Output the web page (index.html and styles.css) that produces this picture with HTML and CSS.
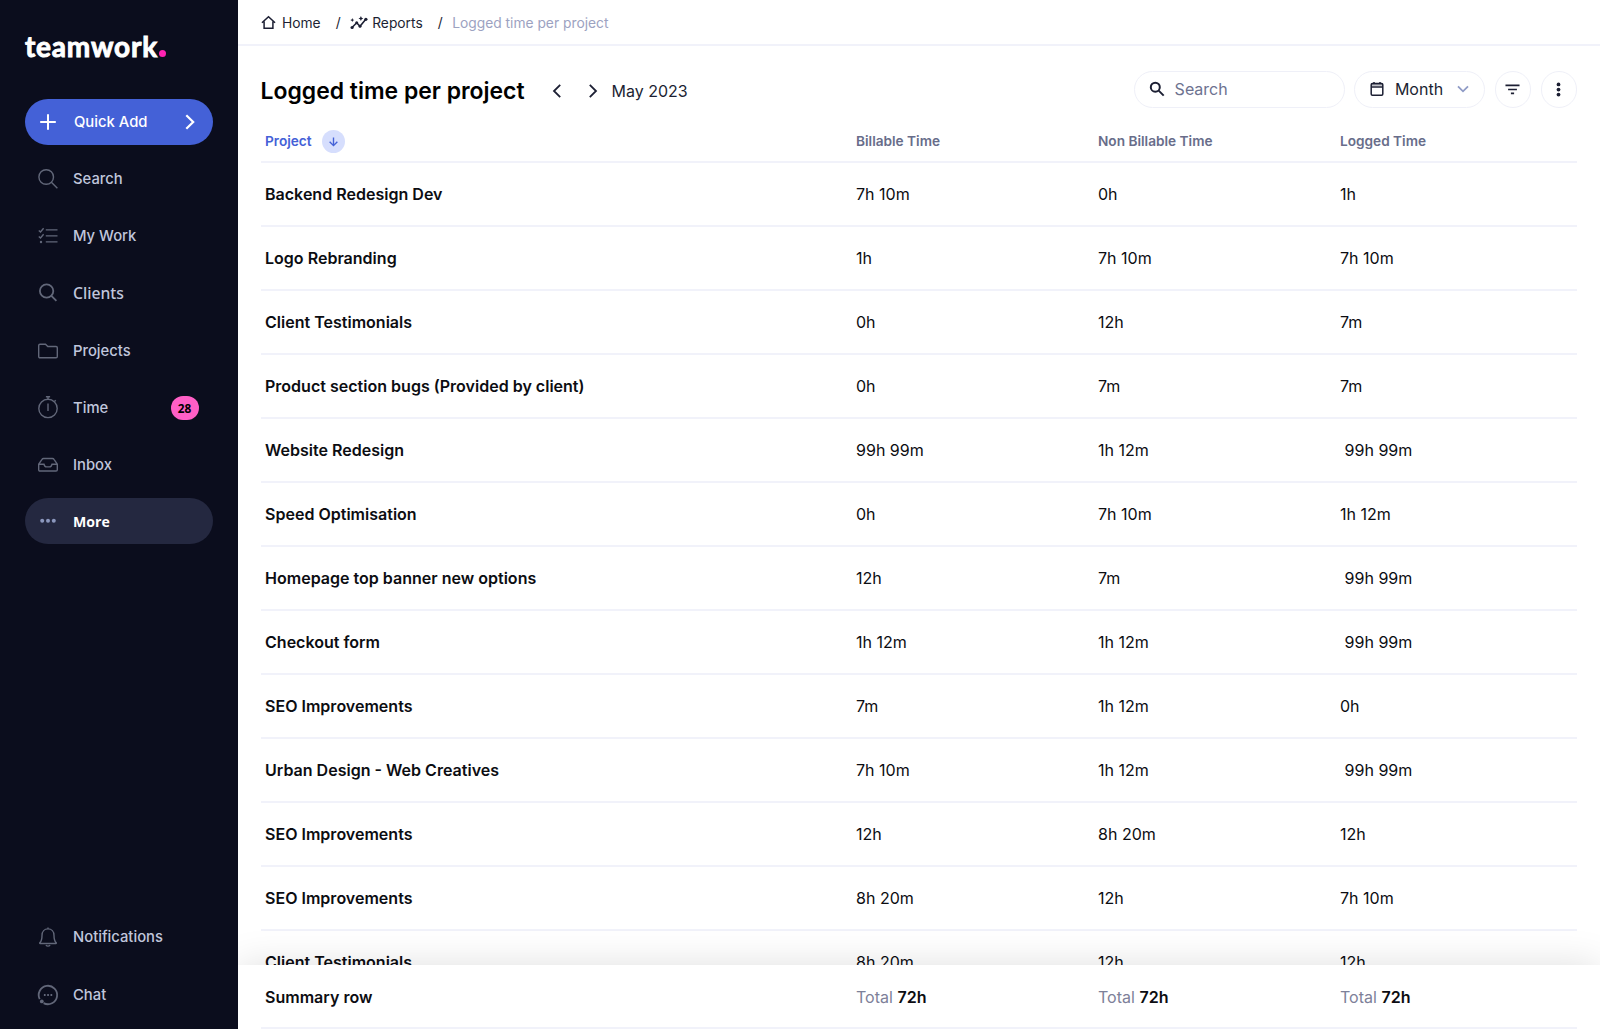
FILE: index.html
```
<!DOCTYPE html>
<html lang="en">
<head>
  <meta charset="UTF-8" />
  <meta name="viewport" content="width=device-width, initial-scale=1" />
  <title>Logged time per project</title>
  <link rel="stylesheet" href="styles.css">
</head>
<body>

  <!-- SIDEBAR -->
  <aside class="sidebar">
    <div class="logo">teamwork<span class="logo-dot"></span></div>

    <nav class="side-nav">
      <a href="#" class="nav-item quick-add">
        <svg class="icon" viewBox="0 0 20 20"><path d="M10 2.2v15.6M2.2 10h15.6"/></svg>
        Quick Add
        <svg class="arrow" viewBox="0 0 10 16"><path d="M1.3 1.2 8.2 8l-6.9 6.8"/></svg>
      </a>
      <a href="#" class="nav-item">
        <svg class="icon" viewBox="0 0 20 20"><circle cx="8.2" cy="8" r="7.3"/><path d="m13.4 13.2 6 6"/></svg>
        Search
      </a>
      <a href="#" class="nav-item">
        <svg class="icon" viewBox="0 0 20 20"><path d="M7.8 3.9H19.5M7.8 9.9H19.5M7.8 15.9H19.5M.8 4.4l1.7 1.5L5.6 2.3M.8 10.4l1.7 1.5L5.6 8.3"/><circle class="dot" cx="3" cy="16" r="1.2"/></svg>
        My Work
      </a>
      <a href="#" class="nav-item clients">
        <svg class="icon" viewBox="0 0 20 20"><circle cx="8.6" cy="8" r="6.7"/><path d="m13.4 12.9 5 5"/></svg>
        Clients
      </a>
      <a href="#" class="nav-item">
        <svg class="icon" viewBox="0 0 20 20"><path d="M.7 4.5q0-1.3 1.3-1.3h5.500l2.300 2.300h8.200q1.300 0 1.300 1.300v8.700q0 1.300-1.300 1.300H2q-1.300 0-1.300-1.300z"/></svg>
        Projects
      </a>
      <a href="#" class="nav-item">
        <svg class="icon" viewBox="0 0 20 20"><circle cx="10" cy="10.400" r="9.200"/><path d="M10 5.600v7.500M7.900-1.200h4.200M10-1.200v2.400M16.500 3.500l1.200-1.200"/></svg>
        Time
        <span class="badge">28</span>
      </a>
      <a href="#" class="nav-item">
        <svg class="icon" viewBox="0 0 20 20"><path d="M.7 9.200 4 4.300q.5-.8 1.500-.8h9q1 0 1.500.8l3.300 4.900v5.500q0 1.300-1.300 1.300H2q-1.300 0-1.300-1.300zh5.300q.8 2.700 2.500 2.700h3q1.700 0 2.500-2.700h5.300"/></svg>
        Inbox
      </a>
      <a href="#" class="nav-item active">
        <svg class="icon" viewBox="0 0 20 20"><circle class="dot" cx="4.200" cy="9.800" r="2"/><circle class="dot" cx="10" cy="9.800" r="2"/><circle class="dot" cx="15.800" cy="9.800" r="2"/></svg>
        More
      </a>
    </nav>

    <nav class="side-nav bottom">
      <a href="#" class="nav-item">
        <svg class="icon" viewBox="0 0 20 20"><path d="M10 .6v1.300M1.800 15.800c1.700-1.700 2.200-3.400 2.200-7.300 0-4 2.500-6.600 6-6.600s6 2.600 6 6.600c0 3.900.5 5.600 2.200 7.300.3.300.1.700-.3.700H2.100c-.4 0-.6-.4-.3-.7zM7.800 18.300q2.200 1.700 4.400 0"/></svg>
        Notifications
      </a>
      <a href="#" class="nav-item">
        <svg class="icon chat" viewBox="0 0 20 20"><path d="M1.700 14.100A9.200 9.200 0 1 1 5.600 18.100"/><circle class="dot" cx="3.800" cy="16.400" r="1.900"/><path d="M5.900 10h1.700M9.200 10h1.700M12.500 10h1.700"/></svg>
        Chat
      </a>
    </nav>
  </aside>

  <!-- MAIN -->
  <main class="main">
    <div class="breadcrumb">
      <a href="#">
        <svg class="home-icon" viewBox="0 0 16 16"><path d="M3.300 7v7.100h9.400V7M1 8.300l7-6.500 7 6.500"/></svg>
        Home
      </a>
      <span class="slash">/</span>
      <a href="#">
        <svg class="reports-icon" viewBox="0 0 18 14"><path d="m2.300 11.300 4.400-4.500 3.300 3.500 5.800-7"/><circle cx="2.100" cy="11.500" r="1.600"/><circle cx="6.700" cy="6.800" r="1.500"/><circle cx="10" cy="10.200" r="1.500"/><circle cx="15.900" cy="3.300" r="1.600"/><path class="spark" d="m10.900.1.800 1.600 1.600.8-1.600.8-.8 1.600-.8-1.600-1.600-.8 1.600-.8zM2.300 2.100l.6 1.400 1.400.6-1.400.6-.6 1.400-.6-1.400-1.400-.6 1.400-.6z"/></svg>
        Reports
      </a>
      <span class="slash">/</span>
      <span class="current">Logged time per project</span>
    </div>

    <div class="toolbar">
      <h1>Logged time per project</h1>
      <div class="period">
        <svg viewBox="0 0 8 14"><path d="M7.200.8 1 7l6.200 6.200"/></svg>
        <svg viewBox="0 0 8 14"><path d="M.8.8 7 7 .8 13.200"/></svg>
        <span>May 2023</span>
      </div>
      <div class="controls">
        <div class="search-box">
          <svg viewBox="0 0 16 16"><circle cx="6.300" cy="6.200" r="4.500"/><path d="m9.700 9.600 5 5"/></svg>
          Search
        </div>
        <button class="month">
          <svg class="calendar" viewBox="0 0 14 16"><rect x="1.200" y="2.600" width="11.600" height="11.600" rx="1.200"/><path d="M1.200 6h11.600M4 .9v1.700M10 .9v1.700"/><path d="M1.200 3.800h11.600" stroke-opacity=".5"/></svg>
          Month
          <svg class="chevron" viewBox="0 0 12 8"><path d="m1 1.300 5 5 5-5"/></svg>
        </button>
        <button class="round"><svg viewBox="0 0 16 16"><path d="M.5 3.600h15M3.300 8h9.400M6.300 12.200h3.400"/></svg></button>
        <button class="round dots"><svg viewBox="0 0 16 16"><circle cx="8" cy="2.600" r="2"/><circle cx="8" cy="8" r="2"/><circle cx="8" cy="13.400" r="2"/></svg></button>
      </div>
    </div>

    <div class="table">
      <div class="row head">
        <span class="sorted">Project
          <i class="sort"><svg viewBox="0 0 12 12"><path d="M6 1.500v9M1.800 6.300 6 10.500l4.200-4.200"/></svg></i>
        </span>
        <span>Billable Time</span><span>Non Billable Time</span><span>Logged Time</span>
      </div>
      <div class="row"><b>Backend Redesign Dev</b><span>7h 10m</span><span>0h</span><span>1h</span></div>
      <div class="row"><b>Logo Rebranding</b><span>1h</span><span>7h 10m</span><span>7h 10m</span></div>
      <div class="row"><b>Client Testimonials</b><span>0h</span><span>12h</span><span>7m</span></div>
      <div class="row"><b>Product section bugs (Provided by client)</b><span>0h</span><span>7m</span><span>7m</span></div>
      <div class="row"><b>Website Redesign</b><span>99h 99m</span><span>1h 12m</span><span>&nbsp;99h 99m</span></div>
      <div class="row"><b>Speed Optimisation</b><span>0h</span><span>7h 10m</span><span>1h 12m</span></div>
      <div class="row"><b>Homepage top banner new options</b><span>12h</span><span>7m</span><span>&nbsp;99h 99m</span></div>
      <div class="row"><b>Checkout form</b><span>1h 12m</span><span>1h 12m</span><span>&nbsp;99h 99m</span></div>
      <div class="row"><b>SEO Improvements</b><span>7m</span><span>1h 12m</span><span>0h</span></div>
      <div class="row"><b>Urban Design - Web Creatives</b><span>7h 10m</span><span>1h 12m</span><span>&nbsp;99h 99m</span></div>
      <div class="row"><b>SEO Improvements</b><span>12h</span><span>8h 20m</span><span>12h</span></div>
      <div class="row"><b>SEO Improvements</b><span>8h 20m</span><span>12h</span><span>7h 10m</span></div>
      <div class="row"><b>Client Testimonials</b><span>8h 20m</span><span>12h</span><span>12h</span></div>
    </div>

    <div class="summary">
      <div class="row">
        <b>Summary row</b>
        <span class="total">Total <b>72h</b></span>
        <span class="total">Total <b>72h</b></span>
        <span class="total">Total <b>72h</b></span>
      </div>
    </div>
  </main>

</body>
</html>
```
FILE: styles.css
```
/* RESET */
* {
  margin: 0;
  padding: 0;
  box-sizing: border-box;
}

html, body {
  height: 100%;
  overflow: hidden;
  font-family: Inter, 'Liberation Sans', sans-serif;
}

body {
  display: flex;
  background: #fff;
  color: #0c0d12;
}

a {
  color: inherit;
  text-decoration: none;
}

svg {
  fill: none;
  stroke: currentColor;
  flex: none;
  overflow: visible;
}

/* SIDEBAR */
.sidebar {
  width: 238px;
  height: 100%;
  flex: none;
  display: flex;
  flex-direction: column;
  padding: 30px 25.5px 12px 25px;
  background: #0b0d1d;
  z-index: 2;
}

.logo {
  display: flex;
  align-items: baseline;
  height: 32px;
  margin-bottom: 36.5px;
  font-family: Lato, sans-serif;
  font-size: 28px;
  font-weight: 700;
  line-height: 32px;
  letter-spacing: 0.8px;
  color: #fff;
  -webkit-text-stroke: 0.9px #fff;
}

.logo-dot {
  width: 7px;
  height: 7px;
  margin-left: 1.5px;
  border-radius: 50%;
  background: #ff22b1;
}

.side-nav {
  display: flex;
  flex-direction: column;
  gap: 11.15px;
}

.side-nav.bottom {
  margin-top: auto;
}

.nav-item {
  display: flex;
  align-items: center;
  height: 46px;
  padding: 1px 13px 0;
  border-radius: 23px;
  font-size: 14.8px;
  font-weight: 500;
  color: #c0c6dc;
}

.nav-item .icon {
  width: 20px;
  height: 20px;
  margin-right: 15px;
  color: #626779;
  stroke-width: 1.4;
}

.dot {
  fill: currentColor;
  stroke: none;
}

.quick-add {
  background: #4461d7;
  color: #fff;
}

.nav-item.quick-add .icon {
  margin-right: 16px;
  color: #fff;
  stroke-width: 2;
}

.quick-add .arrow {
  width: 10px;
  height: 16px;
  margin: 0 5px 0 auto;
  stroke-width: 2.2;
}

.nav-item.clients {
  padding-top: 0;
  font-family: 'Noto Sans', sans-serif;
  font-size: 15.7px;
}

.nav-item.clients .icon,
.nav-item .chat {
  stroke-width: 1.8;
}

.nav-item.active {
  padding-top: 0;
  background: #242840;
  color: #fff;
  font-family: 'Open Sans', sans-serif;
  font-size: 14.1px;
  font-weight: 700;
}

.nav-item.active .icon {
  color: #8b97bd;
}

.badge {
  width: 28px;
  height: 24px;
  margin: 0 1px 0 auto;
  border-radius: 12px;
  background: #ff5fc6;
  color: #000;
  font: 700 11.8px/24px 'Open Sans', sans-serif;
  text-align: center;
}

/* MAIN */
.main {
  position: relative;
  flex: 1;
  height: 100%;
  overflow: hidden;
}

.breadcrumb {
  display: flex;
  align-items: center;
  height: 46px;
  padding: 1px 0 0 23px;
  border-bottom: 2px solid #f1f2fa;
  font-size: 13.8px;
  color: #1c1f33;
}

.breadcrumb a {
  display: flex;
  align-items: center;
}

.home-icon {
  width: 15px;
  height: 15px;
  margin-right: 6px;
  stroke-width: 1.6;
}

.reports-icon {
  width: 18px;
  height: 14px;
  margin-right: 4px;
  stroke-width: 1.6;
}

.reports-icon circle,
.reports-icon .spark {
  fill: currentColor;
  stroke: none;
}

.slash {
  width: 29.5px;
  padding-left: 15px;
}

.breadcrumb .current {
  color: #9ca2c1;
}

.toolbar {
  display: flex;
  align-items: center;
  height: 72px;
  padding: 14px 23px 0 22.5px;
}

h1 {
  margin-top: 4px;
  font-size: 22.95px;
  font-weight: 600;
  color: #000;
  white-space: nowrap;
}

.period {
  display: flex;
  align-items: center;
  margin: 4px 0 0 28px;
  font-size: 16px;
  color: #1c1f33;
}

.period svg {
  width: 8px;
  height: 14px;
  margin-right: 28px;
  stroke-width: 1.8;
}

.period svg + svg {
  margin-right: 15px;
}

.controls {
  display: flex;
  gap: 9.3px;
  margin-left: auto;
}

.search-box,
.month,
.round {
  display: flex;
  align-items: center;
  height: 37px;
  border: 1.5px solid #eff0f8;
  border-radius: 19px;
  background: #fff;
  font: 400 16px Inter, sans-serif;
  color: #1c1f33;
}

.search-box {
  width: 211px;
  padding-left: 14px;
  color: #6d7290;
}

.search-box svg {
  width: 16px;
  height: 16px;
  margin-right: 10px;
  color: #1c1f33;
  stroke-width: 2;
}

.month {
  width: 131.5px;
  padding-left: 15px;
}

.calendar {
  width: 14px;
  height: 16px;
  margin-right: 11px;
  stroke-width: 1.5;
}

.chevron {
  width: 12px;
  height: 8px;
  margin-left: 14px;
  color: #8f9bc6;
  stroke-width: 1.8;
}

.round {
  width: 36.5px;
  justify-content: center;
}

.round svg {
  width: 15px;
  height: 15px;
  stroke-width: 1.8;
}

.dots svg {
  fill: currentColor;
  stroke: none;
}

/* TABLE */
.table {
  padding: 0 23px;
}

.row {
  display: grid;
  grid-template-columns: 591px 242px 242px 1fr;
  align-items: center;
  height: 64.04px;
  padding-left: 4px;
  border-bottom: 2px solid #f1f2fa;
  font-size: 16.05px;
}

.row b {
  font-weight: 600;
}

.row.head {
  height: 45px;
  padding-top: 3px;
  font-size: 13.65px;
  font-weight: 600;
  color: #686d8a;
}

.sorted {
  display: flex;
  align-items: center;
  color: #4461d7;
}

.sort {
  display: flex;
  align-items: center;
  justify-content: center;
  width: 23px;
  height: 23px;
  margin-left: 10px;
  border-radius: 50%;
  background: #d6defd;
}

.sort svg {
  width: 11px;
  height: 11px;
  stroke-width: 1.5;
}

.summary {
  position: absolute;
  left: 0;
  right: 0;
  bottom: 0;
  padding: 0 23px;
  background: #fff;
  box-shadow: 0 0 38px rgba(0, 0, 0, 0.13);
}

.summary .row {
  padding-top: 2px;
}

.total {
  color: #7d8199;
}

.total b {
  color: #0c0d12;
}
```
